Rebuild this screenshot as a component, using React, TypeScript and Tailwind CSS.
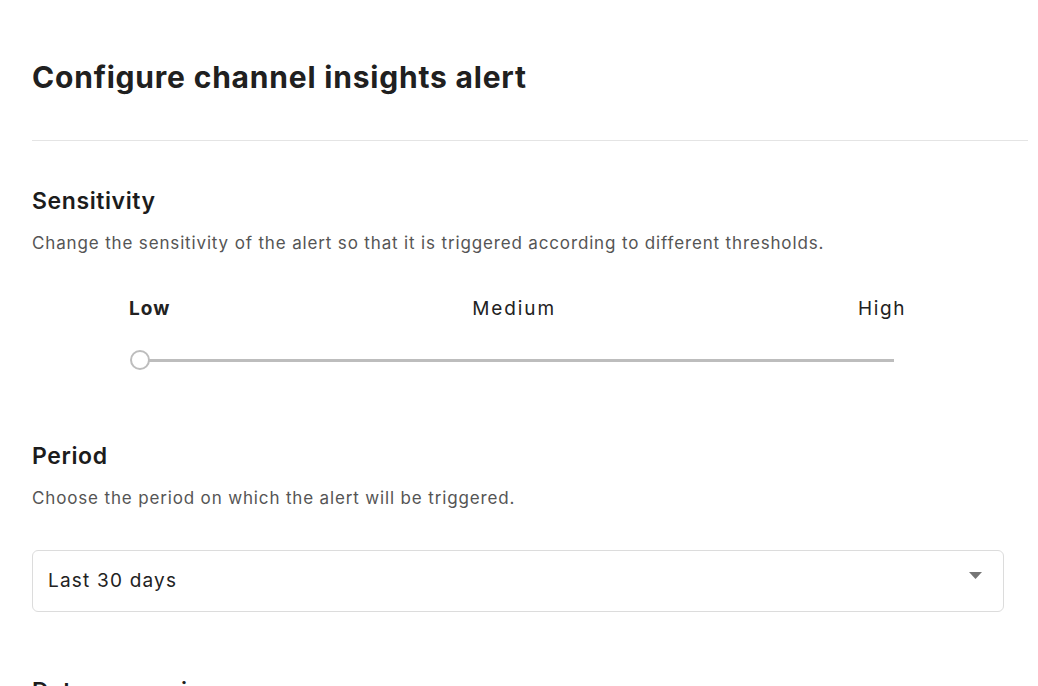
import React from "react";

export default function App() {
  const font = { fontFamily: "Inter, 'Noto Sans', sans-serif" };
  return (
    <div className="min-h-[686px] bg-white pl-8 pr-[10px] pt-[58px] text-[#212121]" style={font}>
      <h1 className="text-[30px] font-bold leading-[38px] tracking-[0.8px] text-[#202020]">
        Configure channel insights alert
      </h1>
      <div className="mt-[44px] h-px w-[996px] bg-[#e4e4e4]" />

      <h2 className="mt-[45px] text-[23px] font-semibold leading-[30px] tracking-[0.6px] text-[#1c1c1c]">Sensitivity</h2>
      <p className="mt-[15px] text-[17px] leading-[24px] text-[#555555] tracking-[0.85px]">
        Change the sensitivity of the alert so that it is triggered according to different thresholds.
      </p>

      <div className="mt-[41px] ml-[97px] w-[777px]">
        <div className="flex justify-between text-[19px] leading-[26px] text-[#222222]">
          <span className="font-bold tracking-[1px]">Low</span>
          <span className="tracking-[1.9px]">Medium</span>
          <span className="tracking-[1.6px]">High</span>
        </div>
        <div className="relative mt-[27px] h-[22px] w-[765px]">
          <div className="absolute left-[4px] right-0 top-[10px] h-[3px] bg-[#bdbdbd]" />
          <div className="absolute left-px top-px h-5 w-5 rounded-full border-2 border-[#bdbdbd] bg-white" />
        </div>
      </div>

      <h2 className="mt-[70px] text-[23px] font-semibold leading-[30px] tracking-[0.6px] text-[#1c1c1c]">Period</h2>
      <p className="mt-[15px] text-[17px] leading-[24px] text-[#555555] tracking-[0.85px]">
        Choose the period on which the alert will be triggered.
      </p>

      <div className="mt-[40px] flex h-[62px] w-[972px] items-center justify-between rounded-md border border-[#dcdcdc] pl-[15px] pr-[21px]">
        <span className="text-[19px] leading-[26px] text-[#222222] tracking-[1.2px]">Last 30 days</span>
        <svg width="13" height="8" viewBox="0 0 13 8" className="mb-[10px]">
          <path d="M0 0 H13 L6.5 7 Z" fill="#757575" />
        </svg>
      </div>

      <h2 className="mt-[64px] text-[23px] font-semibold leading-[30px] tracking-[0.6px] text-[#1c1c1c]">Data comparison</h2>
    </div>
  );
}
